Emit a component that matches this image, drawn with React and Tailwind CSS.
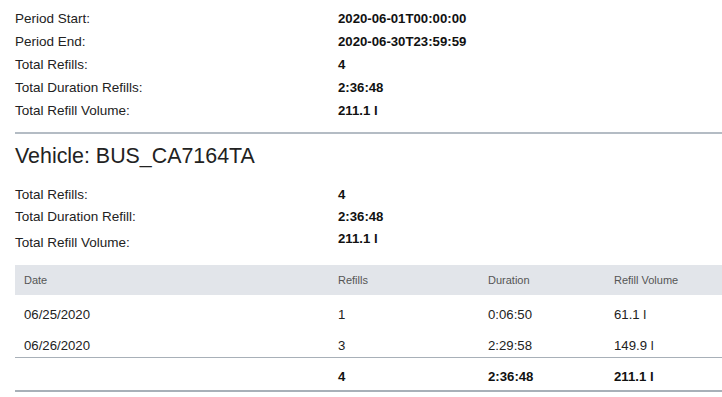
const summary = [
  ["Period Start:", "2020-06-01T00:00:00"],
  ["Period End:", "2020-06-30T23:59:59"],
  ["Total Refills:", "4"],
  ["Total Duration Refills:", "2:36:48"],
  ["Total Refill Volume:", "211.1 l"],
];

const rows = [
  { date: "06/25/2020", refills: "1", duration: "0:06:50", volume: "61.1 l" },
  { date: "06/26/2020", refills: "3", duration: "2:29:58", volume: "149.9 l" },
];

function InfoRow({ label, value, className = "" }) {
  return (
    <div className={`flex items-center ${className}`}>
      <div className="w-[323px] text-[#222] text-[13.5px]">{label}</div>
      <div className="font-bold text-[#111]">{value}</div>
    </div>
  );
}

export default function App() {
  return (
    <div
      className="bg-white w-[722px] h-[397px] overflow-hidden pl-[15px] text-[13.2px] leading-[15px]"
      style={{ fontFamily: '"Liberation Sans", Arial, sans-serif' }}
    >
      <div className="pt-[7px]">
        {summary.map(([l, v]) => (
          <InfoRow key={l} label={l} value={v} className="h-[23px]" />
        ))}
      </div>

      <div className="mt-[10px] h-[2px] bg-[#b4bcc4]" />

      <h2 className="text-[21.4px] text-[#222] mt-[10px] leading-[24px]">Vehicle: BUS_CA7164TA</h2>

      <div className="mt-[15px]">
        <InfoRow label="Total Refills:" value="4" className="h-[22px]" />
        <InfoRow label="Total Duration Refill:" value="2:36:48" className="h-[22px]" />
        <div className="flex h-[28px]">
          <div className="w-[323px] text-[#222] text-[13.5px] pt-[8px]">Total Refill Volume:</div>
          <div className="font-bold text-[#111] pt-[4px]">211.1 l</div>
        </div>
      </div>

      <table className="mt-[10px] w-[707px] border-collapse text-left">
        <thead>
          <tr className="bg-[#e2e5ea] h-[30px] text-[11px] text-[#555]">
            <th className="font-normal pl-[9px] w-[323px]">Date</th>
            <th className="font-normal w-[150px]">Refills</th>
            <th className="font-normal w-[126px]">Duration</th>
            <th className="font-normal">Refill Volume</th>
          </tr>
        </thead>
        <tbody className="text-[#222]">
          {rows.map((r) => (
            <tr key={r.date}>
              <td className="pl-[9px] pt-[12px] pb-[4px]">{r.date}</td>
              <td className="pt-[12px] pb-[4px]">{r.refills}</td>
              <td className="pt-[12px] pb-[4px]">{r.duration}</td>
              <td className="pt-[12px] pb-[4px]">{r.volume}</td>
            </tr>
          ))}
          <tr className="border-t border-[#a8b0b8] border-b-2 border-b-[#a8b0b8] font-bold text-[#111]">
            <td className="pl-[9px] pt-[11px] pb-[6px]"></td>
            <td className="pt-[11px] pb-[6px]">4</td>
            <td className="pt-[11px] pb-[6px]">2:36:48</td>
            <td className="pt-[11px] pb-[6px]">211.1 l</td>
          </tr>
        </tbody>
      </table>
    </div>
  );
}
